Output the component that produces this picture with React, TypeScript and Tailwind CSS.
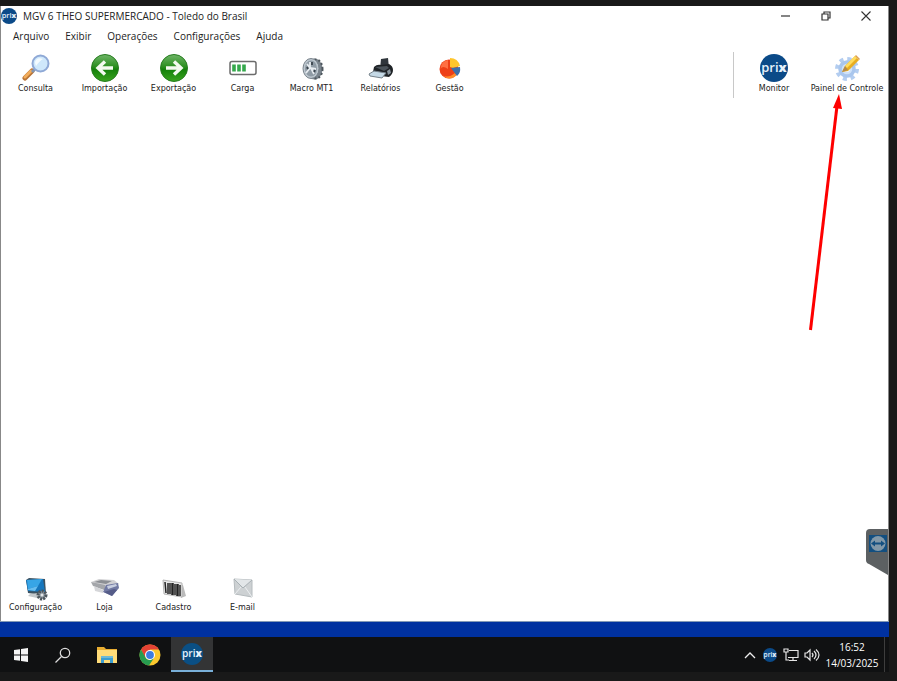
import React from "react";

type Item = { label: string; icon: React.ReactNode };

const MENUS = ["Arquivo", "Exibir", "Operações", "Configurações", "Ajuda"];

function PrixLogo({ className, square = false }: { className: string; square?: boolean }) {
  return (
    <svg viewBox="0 0 28 28" className={className} aria-hidden="true">
      <circle cx="14" cy="14" r="14" fill={square ? "#0a4f84" : "#0b4a88"} />
      <text x="14" y="18" textAnchor="middle" fontSize="13" fill="#e6f2fb" fontFamily="Open Sans, sans-serif">
        <tspan fontWeight="600">pri</tspan>
        <tspan fontWeight="800">x</tspan>
      </text>
    </svg>
  );
}

function MagnifierIcon() {
  return (
    <svg viewBox="0 0 28 28" className="h-7 w-7">
      <path d="M3 24 10 17" stroke="#b97435" strokeWidth="5" strokeLinecap="round" />
      <path d="M3 23 9 17" stroke="#f2ad5c" strokeWidth="3" strokeLinecap="round" />
      <path d="m10 18 3-3" stroke="#8494ad" strokeWidth="3" />
      <circle cx="18.500" cy="9.500" r="8" fill="#cfe8fb" stroke="#8fa9d6" strokeWidth="2" />
      <path d="M13 9c0-4 4-6 8-4-2 1-5 4-7 7z" fill="#f4fbff" />
    </svg>
  );
}

function GreenArrowIcon({ right = false }: { right?: boolean }) {
  return (
    <svg viewBox="0 0 28 28" className="h-7 w-7">
      <defs>
        <linearGradient id="green" x1="0" y1="0" x2="0" y2="1">
          <stop offset="0" stopColor="#6fb568" />
          <stop offset=".45" stopColor="#2c8f20" />
          <stop offset=".55" stopColor="#14800b" />
          <stop offset="1" stopColor="#3aa51e" />
        </linearGradient>
      </defs>
      <circle cx="14" cy="14" r="13.500" fill="url(#green)" stroke="#277c20" />
      <path
        d={right ? "M6 14h14M14 7.500l7 6.500-7 6.500" : "M22 14H8M14 7.500 7 14l7 6.500"}
        fill="none"
        stroke="#f4faf0"
        strokeWidth="3.400"
      />
    </svg>
  );
}

function BatteryIcon() {
  return (
    <svg viewBox="0 0 28 28" className="h-7 w-7">
      <rect x="1" y="7.500" width="26" height="13" rx="2" fill="#fff" stroke="#6b6b6b" strokeWidth="1.500" />
      <path d="M5 10.500v7M10 10.500v7M15 10.500v7" stroke="#35a84c" strokeWidth="3.600" />
    </svg>
  );
}

function ClockGearIcon() {
  return (
    <svg viewBox="0 0 28 28" className="h-7 w-7">
      <ellipse cx="16.500" cy="15" rx="8" ry="10.500" fill="#7a848c" />
      <ellipse cx="18" cy="15" rx="6.500" ry="9.500" fill="none" stroke="#4d565d" strokeWidth="2" strokeDasharray="2 2" />
      <ellipse cx="13" cy="14.500" rx="8" ry="10" fill="#bcc6ce" stroke="#79838c" />
      <ellipse cx="13" cy="14.500" rx="6" ry="8" fill="#8f9ba5" />
      <path d="M12 8v6l-4 5M12 14l6 1M9 10l3 4M13 14l3 6" fill="none" stroke="#e7ecf0" strokeWidth="1.800" />
      <path d="M14 8v3M9 13l1 2M16 18l1-2" stroke="#39434c" strokeWidth="1.800" />
    </svg>
  );
}

function PrinterIcon() {
  return (
    <svg viewBox="0 0 28 28" className="h-7 w-7">
      <path d="m14 5 7-1 1 10-9 1z" fill="#30363c" />
      <path d="M7 13q3-3 7-2l8-1q4 2 4 6 0 4-4 7l-8-1-8-4z" fill="#1f2327" />
      <path d="m8 13 12-1 2 2-5 3z" fill="#4b535a" />
      <path d="m2 20 5-3 12 2-4 5-12-2z" fill="#c5d9e6" stroke="#76828b" />
      <path d="m20 17 3-2 1 4-3 2z" fill="#8b969f" />
    </svg>
  );
}

function PieIcon() {
  return (
    <svg viewBox="0 0 28 28" className="h-7 w-7">
      <circle cx="13" cy="15" r="9.500" fill="#ee3f17" />
      <path d="M12 15 12 6Q5 7 4.500 15q2-4 7.500 0z" fill="#ff6f43" />
      <path d="M6 21q6 4 13-2l2 2q-7 7-15 0z" fill="#ff8b2b" />
      <path d="M14 13V4q8 0 10 8l-7 2z" fill="#ffc62c" />
      <path d="m15 14 9-1q1 6-3 9z" fill="#3f70aa" />
    </svg>
  );
}

function GearPencilIcon() {
  return (
    <svg viewBox="0 0 28 28" className="h-7 w-7">
      <circle cx="14" cy="15" r="10" fill="none" stroke="#b3cdf0" strokeWidth="4" strokeDasharray="4 3.850" />
      <circle cx="14" cy="15" r="7" fill="#cfe1f8" stroke="#a9c6ed" strokeWidth="3.500" />
      <circle cx="14" cy="15" r="3" fill="#f5f9ff" />
      <path d="m9 18 3-6L22 2l4 4-11 11z" fill="#e8ad20" />
      <path d="m12 12 10-10 2 2-10 10z" fill="#ffdc5c" />
      <path d="m9 18 3-6 3 4z" fill="#b58b4c" />
      <path d="m22 2 1-1 4 4-1 1z" fill="#dda050" />
    </svg>
  );
}

function MonitorGearIcon() {
  return (
    <svg viewBox="0 0 28 24" className="h-6 w-7">
      <path d="m4 3 3-2 16 1 1 15-5 1-13-2z" fill="#3c5261" />
      <path d="m4 3 17-1 2 13L6 14z" fill="#1576bd" />
      <path d="m5 3 15-1-4 7L6 12z" fill="#37a5e6" />
      <path d="m6 12 10-3-3 5-7-1z" fill="#67bdef" />
      <path d="m8 17 8-1 4 4-5 1-9-2z" fill="#c3c8cb" />
      <circle cx="20" cy="18" r="4" fill="#8a949b" stroke="#4c555c" strokeWidth="3" strokeDasharray="2 1" />
      <circle cx="20" cy="18" r="1.500" fill="#e2e5e7" />
    </svg>
  );
}

function ScaleIcon() {
  return (
    <svg viewBox="0 0 28 24" className="h-6 w-7">
      <path d="m0 5 8-3 15 1 5 4-12 4z" fill="#d1d1d3" />
      <path d="m3 5 7-2 11 1-6 3z" fill="#8c8f94" />
      <path d="m0 5 14 3 1 4-2 1-11-4z" fill="#a4a6aa" />
      <path d="m3 9 1 5 8 2v-3z" fill="#d5d6d9" />
      <path d="m15 8 12-2 1 5-7 8-9-4z" fill="#7179a2" />
      <path d="m16 9 9-2 1 2-9 3z" fill="#c8cfe0" />
      <path d="m13 15 10-3 3 1-5 6z" fill="#555c88" />
    </svg>
  );
}

function BarcodeIcon() {
  return (
    <svg viewBox="0 0 28 24" className="h-6 w-7">
      <path d="m21 7 2 1 3 11-5 2z" fill="#bbb" />
      <path d="m3 3 19 3v14L4 17z" fill="#e6e6e6" stroke="#b5b5b5" />
      <path d="m5 5 1 11M8 6v11M10 6v11M15 7v11M20 8v11" stroke="#222" strokeWidth="1.500" />
      <path d="M12.500 6v12M17.500 7v12" stroke="#222" strokeWidth="2.500" />
    </svg>
  );
}

function MailIcon() {
  return (
    <svg viewBox="0 0 28 24" className="h-6 w-7">
      <path d="m5 2 18 1v17L6 17z" fill="#cdd1d3" stroke="#b5bbbe" />
      <path d="m5 2 9 9 9-8" fill="#e2e6e8" stroke="#a8b0b4" />
      <path d="m6 17 6-7m4 0 7 10" stroke="#eceff1" />
    </svg>
  );
}

const TOOLS: Item[] = [
  { label: "Consulta", icon: <MagnifierIcon /> },
  { label: "Importação", icon: <GreenArrowIcon /> },
  { label: "Exportação", icon: <GreenArrowIcon right /> },
  { label: "Carga", icon: <BatteryIcon /> },
  { label: "Macro MT1", icon: <ClockGearIcon /> },
  { label: "Relatórios", icon: <PrinterIcon /> },
  { label: "Gestão", icon: <PieIcon /> },
];

const SHORTCUTS: Item[] = [
  { label: "Configuração", icon: <MonitorGearIcon /> },
  { label: "Loja", icon: <ScaleIcon /> },
  { label: "Cadastro", icon: <BarcodeIcon /> },
  { label: "E-mail", icon: <MailIcon /> },
];

function ToolButton({ item, className = "w-[69px]" }: { item: Item; className?: string }) {
  return (
    <button className={`flex shrink-0 flex-col items-center gap-px whitespace-nowrap font-['DejaVu_Sans',sans-serif] text-[8px] leading-3 text-[#222] ${className}`}>
      {item.icon}
      <span>{item.label}</span>
    </button>
  );
}

function TitleBar() {
  return (
    <header className="flex h-5 items-center pr-0.5 text-[#222]">
      <PrixLogo className="h-4 w-4" />
      <h1 className="ml-1.5 flex-1 whitespace-nowrap text-[10px] leading-5">MGV 6 THEO SUPERMERCADO - Toledo do Brasil</h1>
      <button aria-label="Minimizar" className="flex w-10 justify-center">
        <svg viewBox="0 0 10 10" className="h-2.5 w-2.5"><path d="M0 5h9" stroke="#333" strokeWidth="1.200" /></svg>
      </button>
      <button aria-label="Restaurar" className="flex w-10 justify-center">
        <svg viewBox="0 0 10 10" className="h-2.5 w-2.5" fill="none" stroke="#333" strokeWidth="1.200">
          <path d="M1 3h6v6H1zM3 3V1h6v6H7" />
        </svg>
      </button>
      <button aria-label="Fechar" className="flex w-10 justify-center">
        <svg viewBox="0 0 10 10" className="h-2.5 w-2.5"><path d="m.5.5 9 9m0-9-9 9" stroke="#333" strokeWidth="1.100" /></svg>
      </button>
    </header>
  );
}

function RemoteTab() {
  return (
    <button aria-label="TeamViewer" className="absolute right-0 bottom-[50px] h-[46px] w-[22px]">
      <svg viewBox="0 0 22 46" className="h-full w-full">
        <path d="M22 0H4Q0 0 0 4v27q0 3 3 4l19 11z" fill="#5c6062" />
        <rect x="3" y="6" width="18" height="17" fill="#134f80" />
        <circle cx="12" cy="14.500" r="7.500" fill="#8298a8" />
        <path d="m5 14.500 4-3v2h6v-2l4 3-4 3v-2H9v2z" fill="#134f80" />
      </svg>
    </button>
  );
}

function PointerArrow() {
  return (
    <svg viewBox="0 0 40 238" className="pointer-events-none absolute top-[88px] right-[44px] h-[238px] w-10">
      <path d="M6.500 236 33 12" stroke="#fe0000" strokeWidth="3" />
      <path d="M35 0 38 15l-9-1z" fill="#fe0000" />
    </svg>
  );
}

function Taskbar() {
  return (
    <footer className="flex h-[35px] items-stretch bg-[#101112] text-white">
      <button aria-label="Iniciar" className="flex w-[42px] items-center justify-center">
        <svg viewBox="0 0 14 14" className="h-3.5 w-3.5" fill="#f4f4f4">
          <path d="m0 2 6-.8v5.300H0zM7 1l7-1v6.500H7zM0 7.500h6v5.300L0 12zM7 7.500h7V14l-7-1z" />
        </svg>
      </button>
      <button aria-label="Pesquisar" className="flex w-[42px] items-center justify-center">
        <svg viewBox="0 0 16 16" className="h-4 w-4" fill="none" stroke="#ddd" strokeWidth="1.300">
          <circle cx="10" cy="6" r="4.700" />
          <path d="m6.500 9.500-6 6" />
        </svg>
      </button>
      <button aria-label="Explorador de Arquivos" className="flex w-[45px] items-center justify-center">
        <svg viewBox="0 0 20 18" className="h-[18px] w-5">
          <path d="M0 1h7l2 2h11v14H0z" fill="#e9ae32" />
          <path d="M0 4h20v13H0z" fill="#ffdc79" />
          <path d="M4 17v-6h12v6h-3v-3H7v3z" fill="#3c9ed2" />
          <path d="M4 10h12v2H4z" fill="#6fb9d6" />
        </svg>
      </button>
      <button aria-label="Chrome" className="flex w-[41px] items-center justify-center">
        <svg viewBox="0 0 22 22" className="h-[22px] w-[22px]">
          <circle cx="11" cy="11" r="10.500" fill="#fbc82e" />
          <path d="M2 5.500a10.500 10.500 0 0 1 18 0H11L6.200 14z" fill="#e44234" />
          <path d="m2 5.500 4.500 8Q8 16 11 16l4-2-5 7.500A10.500 10.500 0 0 1 2 5.500z" fill="#279c50" />
          <circle cx="11" cy="11" r="5" fill="#fff" />
          <circle cx="11" cy="11" r="3.900" fill="#3d7ce0" />
        </svg>
      </button>
      <button aria-label="MGV 6" className="ml-px flex w-[42px] items-center justify-center border-b-2 border-[#78afd8] bg-[#333435]">
        <PrixLogo className="h-[22px] w-[22px]" square />
      </button>

      <div className="ml-auto flex items-center">
        <button aria-label="Ícones ocultos" className="flex w-5 justify-center">
          <svg viewBox="0 0 12 8" className="h-2 w-3"><path d="m1 7 5-5 5 5" fill="none" stroke="#eee" strokeWidth="1.300" /></svg>
        </button>
        <button aria-label="Monitor prix" className="flex w-5 justify-center">
          <PrixLogo className="h-3.5 w-3.5" />
        </button>
        <button aria-label="Rede" className="flex w-[22px] justify-center">
          <svg viewBox="0 0 16 14" className="h-3.5 w-4" fill="none" stroke="#e5e5e5" strokeWidth="1.200">
            <path d="M6 2.500h9v7H5M10 9.500v3M6 12.500h8M1 1v3h4V1zM3 4v8h3" />
          </svg>
        </button>
        <button aria-label="Volume" className="flex w-5 justify-center">
          <svg viewBox="0 0 16 14" className="h-3.5 w-4" fill="none" stroke="#e5e5e5" strokeWidth="1.200">
            <path d="M1 5h2l3-3v10L3 9H1zM8 5q2 2 0 4M10 3q4 4 0 8M12 1.500q6 5.500 0 11" />
          </svg>
        </button>
        <time className="mr-1 ml-0.5 w-14 whitespace-nowrap text-center text-[10px] leading-4">
          <span className="block">16:52</span>
          <span className="block">14/03/2025</span>
        </time>
        <div className="mr-1 h-full w-px bg-[#3d3d3d]" />
      </div>
    </footer>
  );
}

export default function App() {
  return (
    <div className="flex min-h-screen flex-col bg-[#191919] pt-1.5 pr-2 pb-[9px] font-['Open_Sans',sans-serif]">
      <main className="relative flex flex-1 flex-col border-x border-[#888] bg-white">
        <TitleBar />
        <nav className="flex h-5 items-center gap-4 pl-3 text-[10px] leading-5 text-[#222]">
          {MENUS.map((menu) => (
            <button key={menu}>{menu}</button>
          ))}
        </nav>

        <div className="flex items-start pt-2">
          {TOOLS.map((item) => (
            <ToolButton key={item.label} item={item} />
          ))}
          <div className="ml-auto flex">
            <div className="-mt-0.5 mr-2 h-[46px] w-px bg-[#c8c8c8]" />
            <ToolButton item={{ label: "Monitor", icon: <PrixLogo className="h-7 w-7" /> }} className="w-16" />
            <ToolButton item={{ label: "Painel de Controle", icon: <GearPencilIcon /> }} className="w-[82px]" />
          </div>
        </div>

        <div className="relative flex-1">
          <RemoteTab />
        </div>

        <div className="-mt-12 flex pb-[7px]">
          {SHORTCUTS.map((item) => (
            <ToolButton key={item.label} item={item} />
          ))}
        </div>
        <PointerArrow />
      </main>
      <div className="h-4 border-t border-[#8399b5] bg-[#0031a0]" />
      <Taskbar />
    </div>
  );
}
